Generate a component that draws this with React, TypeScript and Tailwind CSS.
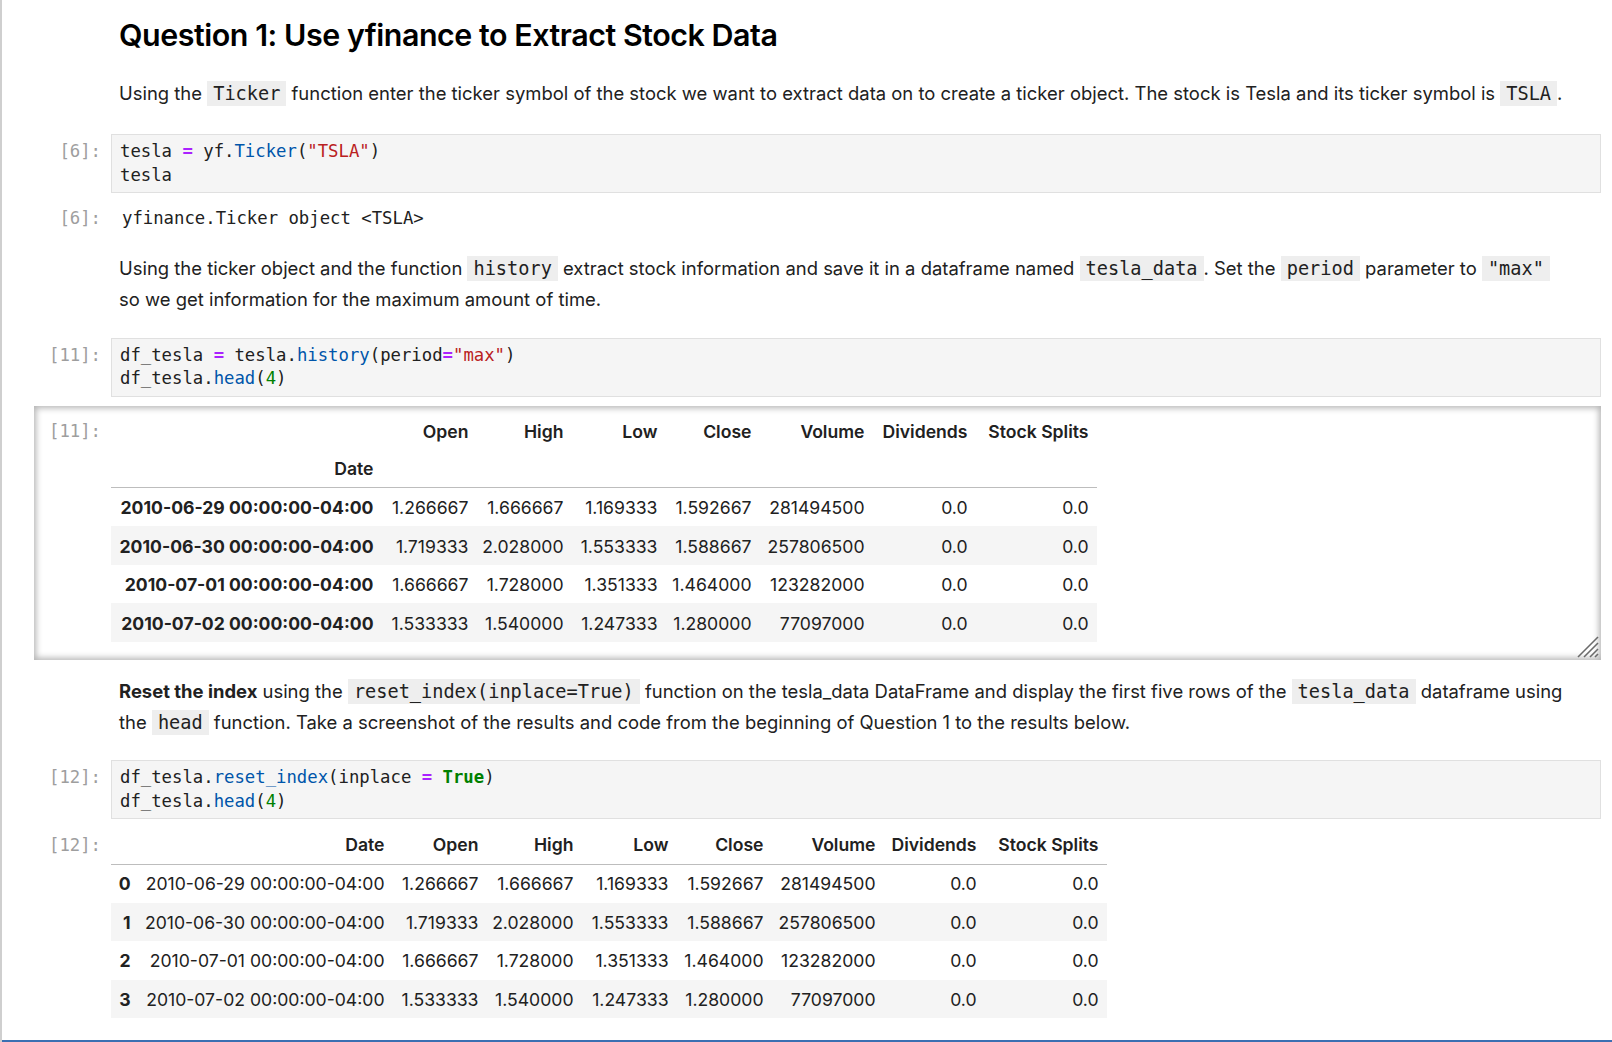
import React from "react"

const mono = "font-['DejaVu_Sans_Mono',monospace]"
const sans = "font-['Inter','Liberation_Sans',sans-serif]"

function Chip({ children }: { children: React.ReactNode }) {
	return (
		<code className={`${mono} bg-[#eeeeee] px-[6px] py-[2px] text-[18.6px] text-[#212121]`}>
			{children}
		</code>
	)
}

function Prompt({ n, className = "" }: { n: number; className?: string }) {
	return (
		<div className={`${mono} shrink-0 text-right pr-[10px] text-[17.3px] leading-[23.6px] text-[#9e9e9e] ${className}`}>
			[{n}]:
		</div>
	)
}

// syntax colours taken from the jupyter codemirror theme
const op = "text-[#aa22ff] font-bold"
const fn = "text-[#0055aa]"
const str = "text-[#ba2121]"
const num = "text-[#008000]"
const kw = "text-[#008000] font-bold"

function CodeCell({ n, children }: { n: number; children: React.ReactNode }) {
	return (
		<div className="flex">
			<Prompt n={n} className="w-[109px] pt-[6px]" />
			<div
				className={`${mono} flex-1 mr-[11px] bg-[#f5f5f5] border border-[#e0e0e0] px-[8px] py-[5px] text-[17.3px] leading-[23.6px] text-[#212121] whitespace-pre`}
			>
				{children}
			</div>
		</div>
	)
}

const dates = [
	"2010-06-29 00:00:00-04:00",
	"2010-06-30 00:00:00-04:00",
	"2010-07-01 00:00:00-04:00",
	"2010-07-02 00:00:00-04:00"
]

const rows = [
	["1.266667", "1.666667", "1.169333", "1.592667", "281494500", "0.0", "0.0"],
	["1.719333", "2.028000", "1.553333", "1.588667", "257806500", "0.0", "0.0"],
	["1.666667", "1.728000", "1.351333", "1.464000", "123282000", "0.0", "0.0"],
	["1.533333", "1.540000", "1.247333", "1.280000", "77097000", "0.0", "0.0"]
]

const cols = ["Open", "High", "Low", "Close", "Volume", "Dividends", "Stock Splits"]

const t1Widths = ["w-[271px]", "w-[95px]", "w-[95px]", "w-[94px]", "w-[94px]", "w-[113px]", "w-[103px]", "w-[121px]"]
const t2Widths = ["w-[28px]", "w-[254px]", "w-[94px]", "w-[95px]", "w-[95px]", "w-[95px]", "w-[112px]", "w-[101px]", "w-[122px]"]

const cell = "text-right pr-[8.5px] pl-0 whitespace-nowrap"
const body = "text-right pr-[8.5px] pl-0 pt-[2px] whitespace-nowrap"

function IndexedTable() {
	return (
		<table className={`${sans} table-fixed border-collapse text-[17.6px] text-[#212121] w-[986px]`}>
			<colgroup>
				{t1Widths.map((w, i) => (
					<col key={i} className={w} />
				))}
			</colgroup>
			<thead className="border-b border-[#bdbdbd]">
				<tr className="h-[38px]">
					<th></th>
					{cols.map(c => (
						<th key={c} className={`${cell} font-semibold`}>
							{c}
						</th>
					))}
				</tr>
				<tr className="h-[37px]">
					<th className={`${cell} font-semibold`}>Date</th>
					{cols.map(c => (
						<th key={c}></th>
					))}
				</tr>
			</thead>
			<tbody>
				{rows.map((r, i) => (
					<tr key={i} className={`h-[38.5px] ${i % 2 === 1 ? "bg-[#f5f5f5]" : ""}`}>
						<th className={`${body} font-bold`}>{dates[i]}</th>
						{r.map((v, j) => (
							<td key={j} className={`${body} font-normal`}>
								{v}
							</td>
						))}
					</tr>
				))}
			</tbody>
		</table>
	)
}

function ResetTable() {
	return (
		<table className={`${sans} table-fixed border-collapse text-[17.6px] text-[#212121] w-[996px]`}>
			<colgroup>
				{t2Widths.map((w, i) => (
					<col key={i} className={w} />
				))}
			</colgroup>
			<thead className="border-b border-[#bdbdbd]">
				<tr className="h-[37px]">
					<th></th>
					<th className={`${cell} font-semibold`}>Date</th>
					{cols.map(c => (
						<th key={c} className={`${cell} font-semibold`}>
							{c}
						</th>
					))}
				</tr>
			</thead>
			<tbody>
				{rows.map((r, i) => (
					<tr key={i} className={`h-[38.5px] ${i % 2 === 1 ? "bg-[#f5f5f5]" : ""}`}>
						<th className={`${body} font-bold`}>{i}</th>
						<td className={`${body} font-normal`}>{dates[i]}</td>
						{r.map((v, j) => (
							<td key={j} className={`${body} font-normal`}>
								{v}
							</td>
						))}
					</tr>
				))}
			</tbody>
		</table>
	)
}

function ResizeHandle() {
	return (
		<svg className="absolute right-[2px] bottom-[2px]" width="24" height="24" viewBox="0 0 24 24">
			<g stroke="#6b6b6b" strokeWidth="1.6">
				<line x1="3" y1="23" x2="23" y2="3" />
				<line x1="9" y1="23" x2="23" y2="9" />
				<line x1="15" y1="23" x2="23" y2="15" />
				<line x1="20" y1="23" x2="23" y2="20" />
			</g>
		</svg>
	)
}

export default function App() {
	return (
		<div className={`${sans} w-[1612px] h-[1042px] overflow-hidden bg-white border-l-2 border-[#cfcfcf] text-[#212121]`}>
			<div className="flex flex-col h-[1040px] border-b-2 border-[#3b6fb2] box-content">
				{/* title */}
				<div className="flex mt-[15px]">
					<div className="w-[109px] shrink-0" />
					<h2 className="pl-[8px] text-[30.4px] leading-[40px] font-semibold text-black tracking-[-0.45px]">
						Question 1: Use yfinance to Extract Stock Data
					</h2>
				</div>

				<div className="flex mt-[23px]">
					<div className="w-[109px] shrink-0" />
					<p className="pl-[8px] text-[18.45px] leading-[30px] whitespace-nowrap">
						Using the <Chip>Ticker</Chip> function enter the ticker symbol of the stock we want to extract
						data on to create a ticker object. The stock is Tesla and its ticker symbol is <Chip>TSLA</Chip>.
					</p>
				</div>

				<div className="mt-[25px]">
					<CodeCell n={6}>
						tesla <span className={op}>=</span> yf.<span className={fn}>Ticker</span>(
						<span className={str}>"TSLA"</span>){"\n"}tesla
					</CodeCell>
				</div>

				<div className="flex mt-[14px]">
					<Prompt n={6} className="w-[109px]" />
					<div className={`${mono} pl-[11px] text-[17.3px] leading-[23.6px] text-[#212121]`}>
						yfinance.Ticker object &lt;TSLA&gt;
					</div>
				</div>

				<div className="flex mt-[22px]">
					<div className="w-[109px] shrink-0" />
					<p className="pl-[8px] text-[18.45px] leading-[30px] whitespace-nowrap">
						Using the ticker object and the function <Chip>history</Chip> extract stock information and save
						it in a dataframe named <Chip>tesla_data</Chip>. Set the <Chip>period</Chip> parameter to{" "}
						<Chip>"max"</Chip>
						<br />
						so we get information for the maximum amount of time.
					</p>
				</div>

				<div className="mt-[24px]">
					<CodeCell n={11}>
						df_tesla <span className={op}>=</span> tesla.<span className={fn}>history</span>(period
						<span className={op}>=</span>
						<span className={str}>"max"</span>){"\n"}df_tesla.<span className={fn}>head</span>(
						<span className={num}>4</span>)
					</CodeCell>
				</div>

				{/* scrolled output */}
				<div className="relative flex ml-[32px] mr-[11px] mt-[9px] h-[254px] pt-[7px] shadow-[inset_0_0_6px_2px_rgba(0,0,0,0.3)]">
					<Prompt n={11} className="w-[77px] pt-[7px]" />
					<div>
						<IndexedTable />
					</div>
					<ResizeHandle />
				</div>

				<div className="flex mt-[16px]">
					<div className="w-[109px] shrink-0" />
					<p className="pl-[8px] text-[18.45px] leading-[30px] whitespace-nowrap">
						<strong className="font-bold">Reset the index</strong> using the{" "}
						<Chip>reset_index(inplace=True)</Chip> function on the tesla_data DataFrame and display the
						first five rows of the <Chip>tesla_data</Chip> dataframe using
						<br />
						the <Chip>head</Chip> function. Take a screenshot of the results and code from the beginning of
						Question 1 to the results below.
					</p>
				</div>

				<div className="mt-[22px]">
					<CodeCell n={12}>
						df_tesla.<span className={fn}>reset_index</span>(inplace <span className={op}>=</span>{" "}
						<span className={kw}>True</span>){"\n"}df_tesla.<span className={fn}>head</span>(
						<span className={num}>4</span>)
					</CodeCell>
				</div>

				<div className="flex mt-[8px]">
					<Prompt n={12} className="w-[109px] pt-[7px]" />
					<ResetTable />
				</div>
			</div>
		</div>
	)
}
